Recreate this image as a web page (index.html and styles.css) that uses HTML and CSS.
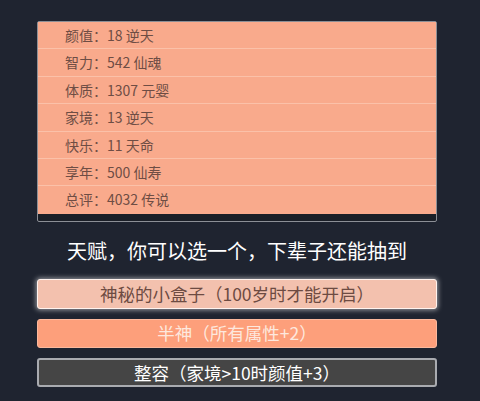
FILE: index.html
```html
<!DOCTYPE html>
<html>
<head>
<meta charset="utf-8">
<link rel="stylesheet" href="styles.css">
</head>
<body>
<div class="page">
  <div class="panel">
    <ul class="list">
      <li class="row">颜值：18 逆天</li>
      <li class="row">智力：542 仙魂</li>
      <li class="row">体质：1307 元婴</li>
      <li class="row">家境：13 逆天</li>
      <li class="row">快乐：11 天命</li>
      <li class="row">享年：500 仙寿</li>
      <li class="row">总评：4032 传说</li>
    </ul>
  </div>
  <div class="title">天赋，你可以选一个，下辈子还能抽到</div>
  <div class="choices">
    <button class="choice selected">神秘的小盒子（100岁时才能开启）</button>
    <button class="choice orange">半神（所有属性+2）</button>
    <button class="choice grey">整容（家境&gt;10时颜值+3）</button>
  </div>
</div>
</body>
</html>
```

FILE: styles.css
```css
html, body {
  margin: 0;
  padding: 0;
  background: #1f2430;
}
body {
  font-family: "Noto Sans CJK SC", "Noto Sans", sans-serif;
  width: 480px;
  height: 401px;
  overflow: hidden;
}
.page {
  padding: 21px 43px 0 37px;
  display: flex;
  flex-direction: column;
}
.panel {
  width: 400px;
  box-sizing: border-box;
  border: 1px solid #8c8f96;
  border-radius: 2px;
  background: #1b1f27;
  padding-bottom: 7px;
}
.list {
  list-style: none;
  margin: 0;
  padding: 0;
  background: #f9aa8c;
}
.row {
  height: 27.4px;
  box-sizing: border-box;
  border-bottom: 1px solid #fbc1a9;
  padding-left: 27px;
  font-size: 14px;
  line-height: 26px;
  color: #6e4d44;
}
.row:last-child {
  border-bottom: none;
}
.title {
  margin-top: 14px;
  width: 400px;
  text-align: center;
  color: #ffffff;
  font-size: 20px;
  line-height: 30px;
}
.choices {
  margin-top: 13px;
  display: flex;
  flex-direction: column;
  gap: 10px;
  width: 400px;
}
.choice {
  font-family: "Noto Sans CJK SC", "Noto Sans", sans-serif;
  font-size: 17.5px;
  height: 29px;
  box-sizing: border-box;
  border-radius: 3px;
  padding: 0;
  line-height: 26px;
  text-align: center;
}
.selected {
  height: 30px;
  background: #f3c1ae;
  border: 1px solid #fff3ee;
  box-shadow: 0 0 5px 1px rgba(255, 255, 255, 0.55);
  color: #6d4b42;
}
.orange {
  background: #fd9f7b;
  border: 1px solid #fbb89c;
  color: #fde8de;
}
.grey {
  background: #454545;
  border: 2px solid #a9abb0;
  color: #ffffff;
}
```
